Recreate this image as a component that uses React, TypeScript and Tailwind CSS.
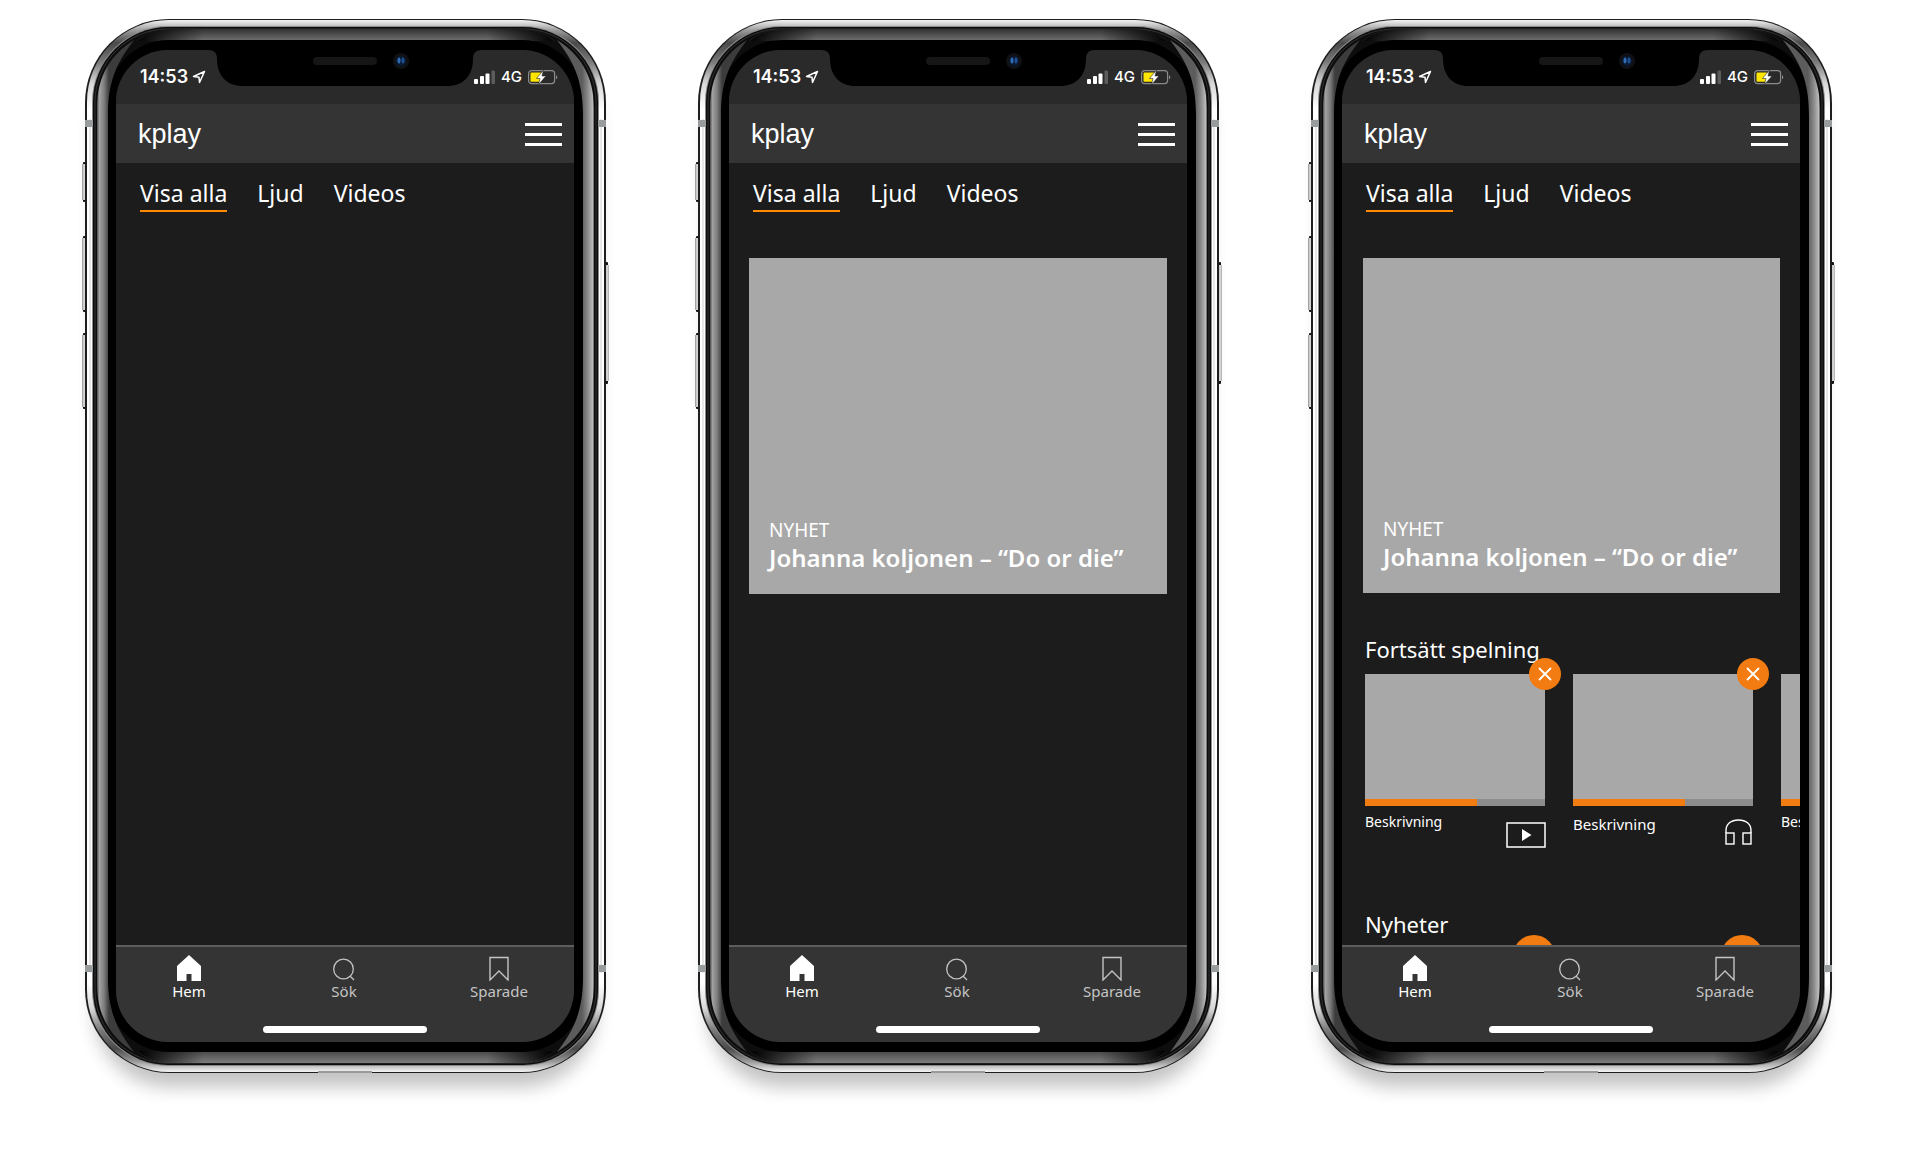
import React from "react";
import type { ReactNode } from "react";

type MediaKind = "video" | "audio";

const continueItems: { id: number; kind: MediaKind; large: boolean; progress: number }[] = [
  { id: 1, kind: "video", large: false, progress: 62 },
  { id: 2, kind: "audio", large: true, progress: 62 },
  { id: 3, kind: "video", large: false, progress: 62 },
];

function DeviceFrame() {
  return (
    <svg
      aria-hidden="true"
      viewBox="0 0 521 1054"
      className="absolute inset-0 h-full w-full overflow-visible"
      fill="none"
    >
      <defs>
        <linearGradient id="steel" x1="0" y1="0" x2="0" y2="1">
          <stop offset="0" stopColor="#f4f4f4" />
          <stop offset="0.01" stopColor="#9a9a9a" />
          <stop offset="0.022" stopColor="#4a4a4a" />
          <stop offset="0.04" stopColor="#7a7a7a" />
          <stop offset="0.06" stopColor="#d8d8d8" />
          <stop offset="0.085" stopColor="#ffffff" />
          <stop offset="0.915" stopColor="#ffffff" />
          <stop offset="0.94" stopColor="#d8d8d8" />
          <stop offset="0.96" stopColor="#7a7a7a" />
          <stop offset="0.978" stopColor="#4a4a4a" />
          <stop offset="0.99" stopColor="#9a9a9a" />
          <stop offset="1" stopColor="#f4f4f4" />
        </linearGradient>
        <linearGradient id="stripL" x1="12" y1="0" x2="24" y2="0" gradientUnits="userSpaceOnUse">
          <stop offset="0" stopColor="#4a4a4a" />
          <stop offset="0.2" stopColor="#a2a2a2" />
          <stop offset="0.6" stopColor="#7c7c7c" />
          <stop offset="1" stopColor="#3c3c3c" />
        </linearGradient>
        <linearGradient id="stripR" x1="509" y1="0" x2="497" y2="0" gradientUnits="userSpaceOnUse">
          <stop offset="0" stopColor="#4a4a4a" />
          <stop offset="0.1" stopColor="#bcbcbc" />
          <stop offset="0.5" stopColor="#8c8c8c" />
          <stop offset="1" stopColor="#5c5c5c" />
        </linearGradient>
        <linearGradient id="stripT" x1="0" y1="9" x2="0" y2="21" gradientUnits="userSpaceOnUse">
          <stop offset="0" stopColor="#2c2c2c" />
          <stop offset="1" stopColor="#6c6c6c" />
        </linearGradient>
        <linearGradient id="stripB" x1="0" y1="1033" x2="0" y2="1044" gradientUnits="userSpaceOnUse">
          <stop offset="0" stopColor="#4c4c4c" />
          <stop offset="1" stopColor="#7e7e7e" />
        </linearGradient>
        <linearGradient id="fade" x1="0" y1="0" x2="1" y2="0">
          <stop offset="0" stopColor="#000" />
          <stop offset="0.16" stopColor="#000" stopOpacity="0" />
          <stop offset="0.84" stopColor="#000" stopOpacity="0" />
          <stop offset="1" stopColor="#000" />
        </linearGradient>
        <linearGradient id="key" x1="0" y1="0" x2="1" y2="0">
          <stop offset="0" stopColor="#8d8d8d" />
          <stop offset="0.5" stopColor="#e2e2e2" />
          <stop offset="1" stopColor="#a8a8a8" />
        </linearGradient>
      </defs>

      {[
        [143, 40],
        [217, 76],
        [314, 76],
      ].map(([y, h]) => (
        <g key={y}>
          <rect x="-2" y={y} width="5" height={h} rx="1" fill="#141414" />
          <rect x="-3" y={y + 2} width="4" height={h - 4} fill="url(#key)" />
        </g>
      ))}
      <rect x="518" y="243" width="5" height="122" rx="1" fill="#141414" />
      <rect x="520" y="246" width="4" height="116" fill="url(#key)" />

      <rect width="521" height="1054" rx="84" fill="#1c1e20" />
      <rect x="2" y="1" width="517" height="1052" rx="82" fill="url(#steel)" />
      <path d="M5 100V954M516 100V954" stroke="#cfcfcf" />
      <rect x="7" y="7" width="507" height="1040" rx="76" fill="#8a8a8a" />
      <rect x="8" y="8" width="505" height="1038" rx="75" fill="#0d0d0e" />
      <rect x="10" y="10" width="501" height="1034" rx="73" stroke="#333336" />
      <path d="M52 22C62 13 74 10 92 10H429C447 10 459 13 469 22Z" fill="url(#stripT)" />
      <path d="M52 22C62 13 74 10 92 10H429C447 10 459 13 469 22Z" fill="url(#fade)" />
      <path d="M52 1032C62 1041 74 1044 92 1044H429C447 1044 459 1041 469 1032Z" fill="url(#stripB)" />
      <path d="M52 1032C62 1041 74 1044 92 1044H429C447 1044 459 1041 469 1032Z" fill="url(#fade)" />
      <rect x="22" y="21" width="477" height="1012" rx="62" fill="#000" />
      <path
        d="M49 21C27 35 12 55 12 90V964C12 999 27 1019 49 1033C33 1012 23 994 23 958V96C23 60 33 42 49 21Z"
        fill="url(#stripL)"
      />
      <path
        d="M472 21C494 35 509 55 509 90V964C509 999 494 1019 472 1033C488 1012 498 994 498 958V96C498 60 488 42 472 21Z"
        fill="url(#stripR)"
      />
      <path d="M0 101h8v7H0zM513 101h8v7h-8zM0 946h8v7H0zM513 946h8v7h-8z" fill="#989c9d" />
      <path d="M233 1053h54" stroke="#9a9a9a" strokeWidth="2" />
    </svg>
  );
}

function Notch() {
  return (
    <svg
      aria-hidden="true"
      viewBox="0 0 458 37"
      className="absolute inset-x-0 top-0 z-10 w-full"
      fill="none"
    >
      <path
        d="M92 0C98 0 101 3 101 9C101 26 111 36 127 36H331C347 36 357 26 357 9C357 3 360 0 366 0Z"
        fill="#000"
      />
      <rect x="197" y="7" width="64" height="8" rx="4" fill="#161616" />
      <circle cx="285" cy="11" r="8" fill="#0f1114" />
      <circle cx="285" cy="11" r="5" fill="#0a1a33" />
      <ellipse cx="283" cy="10.500" rx="1.500" ry="3" fill="#2f6cb3" />
      <ellipse cx="287" cy="10.500" rx="1.500" ry="3" fill="#1f4f94" />
    </svg>
  );
}

function StatusBar() {
  return (
    <div className="flex h-[54px] items-start justify-between bg-[#2a2a2a] pt-4 pr-4 pl-6">
      <div className="flex items-center gap-1 pt-px">
        <span className="font-[Inter] text-[18px] leading-5 font-semibold">14:53</span>
        <svg aria-hidden="true" width="14" height="14" viewBox="0 0 14 14" fill="none">
          <path d="M12.500 1.500L1.500 6.500L7 7.200L7.500 12.500Z" stroke="#fff" strokeWidth="1.500" strokeLinejoin="round" />
        </svg>
      </div>
      <div className="flex items-center gap-1.5 pt-px">
        <svg aria-hidden="true" width="21" height="14" viewBox="0 0 21 14">
          <rect x="0" y="9" width="4" height="5" rx="1" fill="#fff" />
          <rect x="6" y="6" width="4" height="8" rx="1" fill="#fff" />
          <rect x="11.500" y="3.500" width="4" height="10.500" rx="1" fill="#fff" />
          <rect x="17.500" y="0.500" width="3.500" height="13.500" rx="1" fill="#5c5c5c" />
        </svg>
        <span className="font-[Inter] text-[15px] leading-5 font-medium">4G</span>
        <svg aria-hidden="true" width="30" height="15" viewBox="0 0 30 15" fill="none">
          <rect x="0.600" y="0.600" width="26" height="13" rx="3" stroke="#8a8a8a" strokeWidth="1.200" />
          <path d="M28 5.200c1.800.6 1.800 3.400 0 4z" fill="#8a8a8a" />
          <rect x="2.500" y="2.500" width="11" height="9.200" rx="1" fill="#ffe600" />
          <path d="M15.500 0L8.500 8.500H12L10.500 14.500L18 6H14Z" fill="#fff" stroke="#2a2a2a" strokeWidth="0.600" />
        </svg>
      </div>
    </div>
  );
}

function Header() {
  return (
    <header className="flex h-[59px] items-center justify-between bg-[#343434] pr-3 pl-[22px]">
      <a href="#hem" className="font-['Liberation_Sans'] text-[27px] leading-8">
        kplay
      </a>
      <button type="button" aria-label="Meny" className="flex w-[37px] flex-col gap-[7px] pt-0.5">
        <span className="h-[3px] w-full bg-white" />
        <span className="h-[3px] w-full bg-white" />
        <span className="h-[3px] w-full bg-white" />
      </button>
    </header>
  );
}

function Tabs() {
  return (
    <nav aria-label="Filter" className="flex gap-[30px] pt-3.5 pl-6 text-[23px] leading-[33px]">
      <a href="#alla" aria-current="page" className="border-b-2 border-[#ff8a00]">
        Visa alla
      </a>
      <a href="#ljud" className="border-b-2 border-transparent">
        Ljud
      </a>
      <a href="#videos" className="border-b-2 border-transparent">
        Videos
      </a>
    </nav>
  );
}

function Hero({ className }: { className: string }) {
  return (
    <article className={`mt-[46px] flex aspect-[418/336] flex-col justify-end bg-[#a8a8a8] px-5 pb-5 ${className}`}>
      <p className="text-[19px] leading-6">NYHET</p>
      <h2 className="text-[24px] leading-8 font-semibold">Johanna koljonen – “Do or die”</h2>
    </article>
  );
}

function CloseButton({ label }: { label: string }) {
  return (
    <button
      type="button"
      aria-label={label}
      className="absolute -top-4 -right-4 flex size-8 items-center justify-center rounded-full bg-[#f27c12]"
    >
      <svg aria-hidden="true" width="14" height="14" viewBox="0 0 14 14">
        <path d="M1 1L13 13M13 1L1 13" stroke="#fff" strokeWidth="1.800" />
      </svg>
    </button>
  );
}

function VideoIcon() {
  return (
    <svg role="img" aria-label="Video" width="40" height="26" viewBox="0 0 40 26" className="mt-4 -mr-px shrink-0" fill="none">
      <rect x="1" y="1" width="38" height="24" stroke="#fff" strokeWidth="1.500" />
      <path d="M16 7L25.500 13L16 19Z" fill="#fff" />
    </svg>
  );
}

function HeadphonesIcon() {
  return (
    <svg role="img" aria-label="Ljud" width="27" height="26" viewBox="0 0 27 26" className="mt-[13px] mr-px shrink-0" fill="none" stroke="#fff" strokeWidth="1.400">
      <path d="M1 14V11.500C1 5 6 1 13.500 1S26 5 26 11.500V14" />
      <rect x="1" y="14" width="8" height="11" />
      <rect x="18" y="14" width="8" height="11" />
    </svg>
  );
}

function ContinueSection() {
  return (
    <section className="mt-10 pl-[23px]">
      <h3 className="text-[22px] leading-8">Fortsätt spelning</h3>
      <ul className="mt-[9px] flex gap-7">
        {continueItems.map((item) => (
          <li key={item.id} className="w-[180px] shrink-0">
            <div className="relative flex h-[132px] flex-col justify-end bg-[#a8a8a8]">
              <div className="h-[7px] bg-[#8c8c8c]">
                <div className="h-full bg-[#f27c12]" style={{ width: `${item.progress}%` }} />
              </div>
              <CloseButton label="Ta bort" />
            </div>
            <div className="flex items-start justify-between">
              <p className={item.large ? "mt-2 text-[15px] leading-5" : "mt-1.5 text-[14px] leading-5"}>
                Beskrivning
              </p>
              {item.kind === "video" ? <VideoIcon /> : <HeadphonesIcon />}
            </div>
          </li>
        ))}
      </ul>
    </section>
  );
}

function NewsSection() {
  return (
    <section className="mt-[60px] pl-[23px]">
      <h3 className="text-[22px] leading-8">Nyheter</h3>
      <ul className="mt-4 flex gap-[39px]">
        {[1, 2, 3].map((id) => (
          <li key={id} className="relative h-[132px] w-[169px] shrink-0 bg-[#a8a8a8]">
            <span className="absolute -top-[21px] -right-[21px] size-[42px] rounded-full bg-[#f27c12]" />
          </li>
        ))}
      </ul>
    </section>
  );
}

function BottomBar() {
  return (
    <footer className="flex h-[97px] shrink-0 flex-col justify-between border-t-2 border-[#5c5e5e] bg-[#343434] pb-[9px]">
      <nav aria-label="Huvudmeny" className="flex items-start justify-between pt-2 pr-11 pl-[42px] text-[15px] leading-5 text-[#c4c4c4]">
        <a href="#hem" aria-current="page" className="flex w-[62px] flex-col items-center text-white">
          <svg aria-hidden="true" width="24" height="26" viewBox="0 0 24 26">
            <path d="M12 0L24 11V26H14.500V19H9.500V26H0V11Z" fill="#fff" />
          </svg>
          Hem
        </a>
        <a href="#sok" className="flex w-[62px] flex-col items-center">
          <svg aria-hidden="true" width="22" height="26" viewBox="0 0 22 26" fill="none" stroke="#c4c4c4" strokeWidth="1.300">
            <circle cx="10.500" cy="14" r="9.800" />
            <path d="M17 21L21 25" />
          </svg>
          Sök
        </a>
        <a href="#sparade" className="flex w-[62px] flex-col items-center">
          <svg aria-hidden="true" width="20" height="26" viewBox="0 0 20 26" fill="none" stroke="#c4c4c4" strokeWidth="1.400">
            <path d="M1 2.500H19V25L10 16L1 25Z" />
          </svg>
          Sparade
        </a>
      </nav>
      <div className="mx-auto h-[7px] w-[164px] rounded-full bg-white" />
    </footer>
  );
}

function Phone({ children }: { children?: ReactNode }) {
  return (
    <section className="relative w-[521px] shrink-0 rounded-[84px] py-[31px] pr-8 pl-[31px] shadow-[0_24px_18px_-10px_rgba(0,0,0,0.24)]">
      <DeviceFrame />
      <div className="relative flex aspect-[458/992] flex-col overflow-hidden rounded-[52px] bg-[#1c1c1c]">
        <Notch />
        <StatusBar />
        <Header />
        <div className="min-h-0 flex-1 overflow-hidden">
          <Tabs />
          {children}
        </div>
        <BottomBar />
      </div>
    </section>
  );
}

export default function App() {
  return (
    <main className="flex min-h-screen items-start justify-center gap-[92px] overflow-hidden bg-white pt-[19px] pr-[3px] font-['Noto_Sans',sans-serif] text-white">
      <Phone />
      <Phone>
        <Hero className="mx-5" />
      </Phone>
      <Phone>
        <Hero className="mr-5 ml-[21px]" />
        <ContinueSection />
        <NewsSection />
      </Phone>
    </main>
  );
}
